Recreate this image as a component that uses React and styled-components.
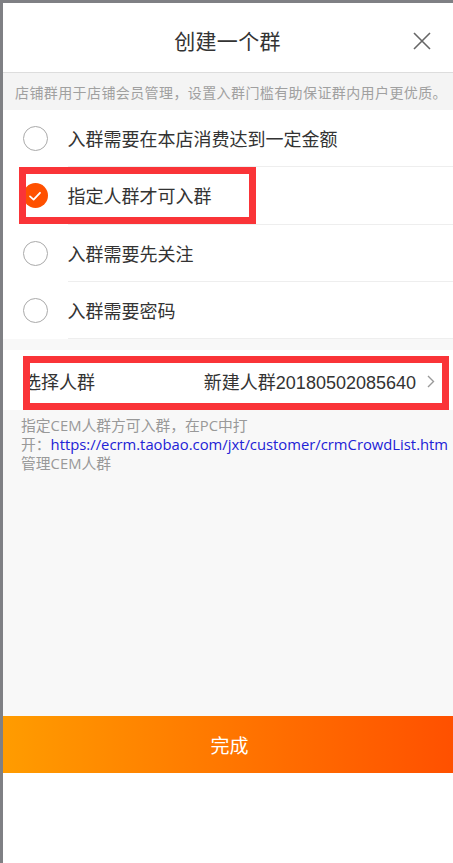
import React from "react"
import styled, { createGlobalStyle } from "styled-components"

const GlobalStyle = createGlobalStyle`
  html, body {
    margin: 0;
    padding: 0;
    background: #7f8084;
    overflow: hidden;
  }
  body {
    font-family: "Liberation Sans", "Noto Sans CJK SC", sans-serif;
    color: #333;
  }
`

const OPTIONS = [
  { label: "入群需要在本店消费达到一定金额" },
  { label: "指定人群才可入群", checked: true, marked: true },
  { label: "入群需要先关注" },
  { label: "入群需要密码" },
]

const CloseIcon = () => (
  <svg width="18" height="18" viewBox="0 0 18 18" fill="none">
    <path d="M1 1L17 17M17 1L1 17" stroke="#666" strokeWidth="1.6" />
  </svg>
)

const CheckIcon = () => (
  <svg width="14" height="14" viewBox="0 0 14 14" fill="none">
    <path d="M2 7.4L5.6 10.6L12 3.8" stroke="#fff" strokeWidth="1.8" strokeLinecap="round" strokeLinejoin="round" />
  </svg>
)

const ChevronIcon = () => (
  <svg width="8" height="13" viewBox="0 0 8 13" fill="none">
    <path d="M1 1L6.5 6.5L1 12" stroke="#999" strokeWidth="1.4" />
  </svg>
)

const App = () => (
  <>
    <GlobalStyle />
    <Page>
      <Header>
        <Title>创建一个群</Title>
        <CloseButton>
          <CloseIcon />
        </CloseButton>
      </Header>
      <Notice>店铺群用于店铺会员管理，设置入群门槛有助保证群内用户更优质。</Notice>
      <OptionList>
        {OPTIONS.map((opt) => (
          <OptionRow key={opt.label}>
            <Radio $checked={opt.checked}>{opt.checked && <CheckIcon />}</Radio>
            <OptionLabel>{opt.label}</OptionLabel>
            {opt.marked && <Mark $top={-0.5} $left={16} $width={237} $height={57} />}
          </OptionRow>
        ))}
      </OptionList>
      <Body>
        <SelectRow>
          <SelectLabel>选择人群</SelectLabel>
          <SelectValue>
            新建人群20180502085640
            <ChevronIcon />
          </SelectValue>
          <Mark $top={6} $left={20} $width={426} $height={54} />
        </SelectRow>
        <Help>
          指定CEM人群方可入群，在PC中打
          <NoWrap>
            开：<Link href="#">https://ecrm.taobao.com/jxt/customer/crmCrowdList.htm</Link>
          </NoWrap>
          管理CEM人群
        </Help>
      </Body>
      <Submit>完成</Submit>
    </Page>
  </>
)

const Page = styled.div`
  margin: 3px 0 0 3px;
  width: 453px;
  height: 860px;
  background: #fff;
  display: flex;
  flex-direction: column;
`

const Header = styled.div`
  position: relative;
  height: 69px;
  border-bottom: 1px solid #ddd;
  display: flex;
  align-items: center;
  justify-content: center;
`

const Title = styled.div`
  font-size: 21px;
  color: #333;
  margin-top: 5px;
  margin-left: -4px;
  letter-spacing: 0.3px;
`

const CloseButton = styled.div`
  position: absolute;
  right: 25px;
  top: 29px;
  display: flex;
`

const Notice = styled.div`
  height: 37px;
  background: #f4f4f4;
  color: #a0a0a0;
  font-size: 14px;
  letter-spacing: 0.4px;
  padding-left: 12px;
  display: flex;
  align-items: center;
  white-space: nowrap;
`

const OptionList = styled.div`
  background: #fff;
`

const OptionRow = styled.div`
  position: relative;
  height: 57.25px;
  display: flex;
  align-items: stretch;
  padding-left: 19.5px;
`

const Radio = styled.div`
  align-self: center;
  box-sizing: border-box;
  width: 25px;
  height: 25px;
  border-radius: 50%;
  border: ${(p) => (p.$checked ? "none" : "1px solid #aaa")};
  background: ${(p) => (p.$checked ? "#ff5000" : "#fff")};
  margin-right: 20px;
  display: flex;
  align-items: center;
  justify-content: center;
  flex-shrink: 0;
`

const OptionLabel = styled.div`
  flex: 1;
  display: flex;
  align-items: center;
  border-bottom: 1px solid #eee;
  font-size: 18px;
  color: #333;
`

const Mark = styled.div`
  position: absolute;
  top: ${(p) => p.$top}px;
  left: ${(p) => p.$left}px;
  width: ${(p) => p.$width}px;
  height: ${(p) => p.$height}px;
  box-sizing: border-box;
  border: 7px solid #fa3438;
  pointer-events: none;
`

const Body = styled.div`
  flex: 1;
  background: #f8f8f8;
  padding-top: 11px;
`

const SelectRow = styled.div`
  position: relative;
  height: 60px;
  background: #fff;
  display: flex;
  align-items: center;
  justify-content: space-between;
  padding: 2px 20px 0 20px;
  box-sizing: border-box;
`

const SelectLabel = styled.div`
  font-size: 18px;
  color: #333;
`

const SelectValue = styled.div`
  display: flex;
  align-items: center;
  gap: 11px;
  margin-right: 1px;
  font-size: 18px;
  color: #333;
`

const Help = styled.div`
  padding: 6px 2px 0 18px;
  font-family: "Open Sans", "Noto Sans CJK SC", sans-serif;
  font-size: 14.8px;
  line-height: 19px;
  color: #999;
`

const NoWrap = styled.span`
  white-space: nowrap;
  display: block;
`

const Link = styled.a`
  color: #2222d6;
  text-decoration: none;
`

const Submit = styled.div`
  height: 57px;
  margin-bottom: 90px;
  background: linear-gradient(90deg, #ff9c00, #ff5000);
  color: #fff;
  font-size: 19px;
  display: flex;
  align-items: center;
  justify-content: center;
`

export default App
